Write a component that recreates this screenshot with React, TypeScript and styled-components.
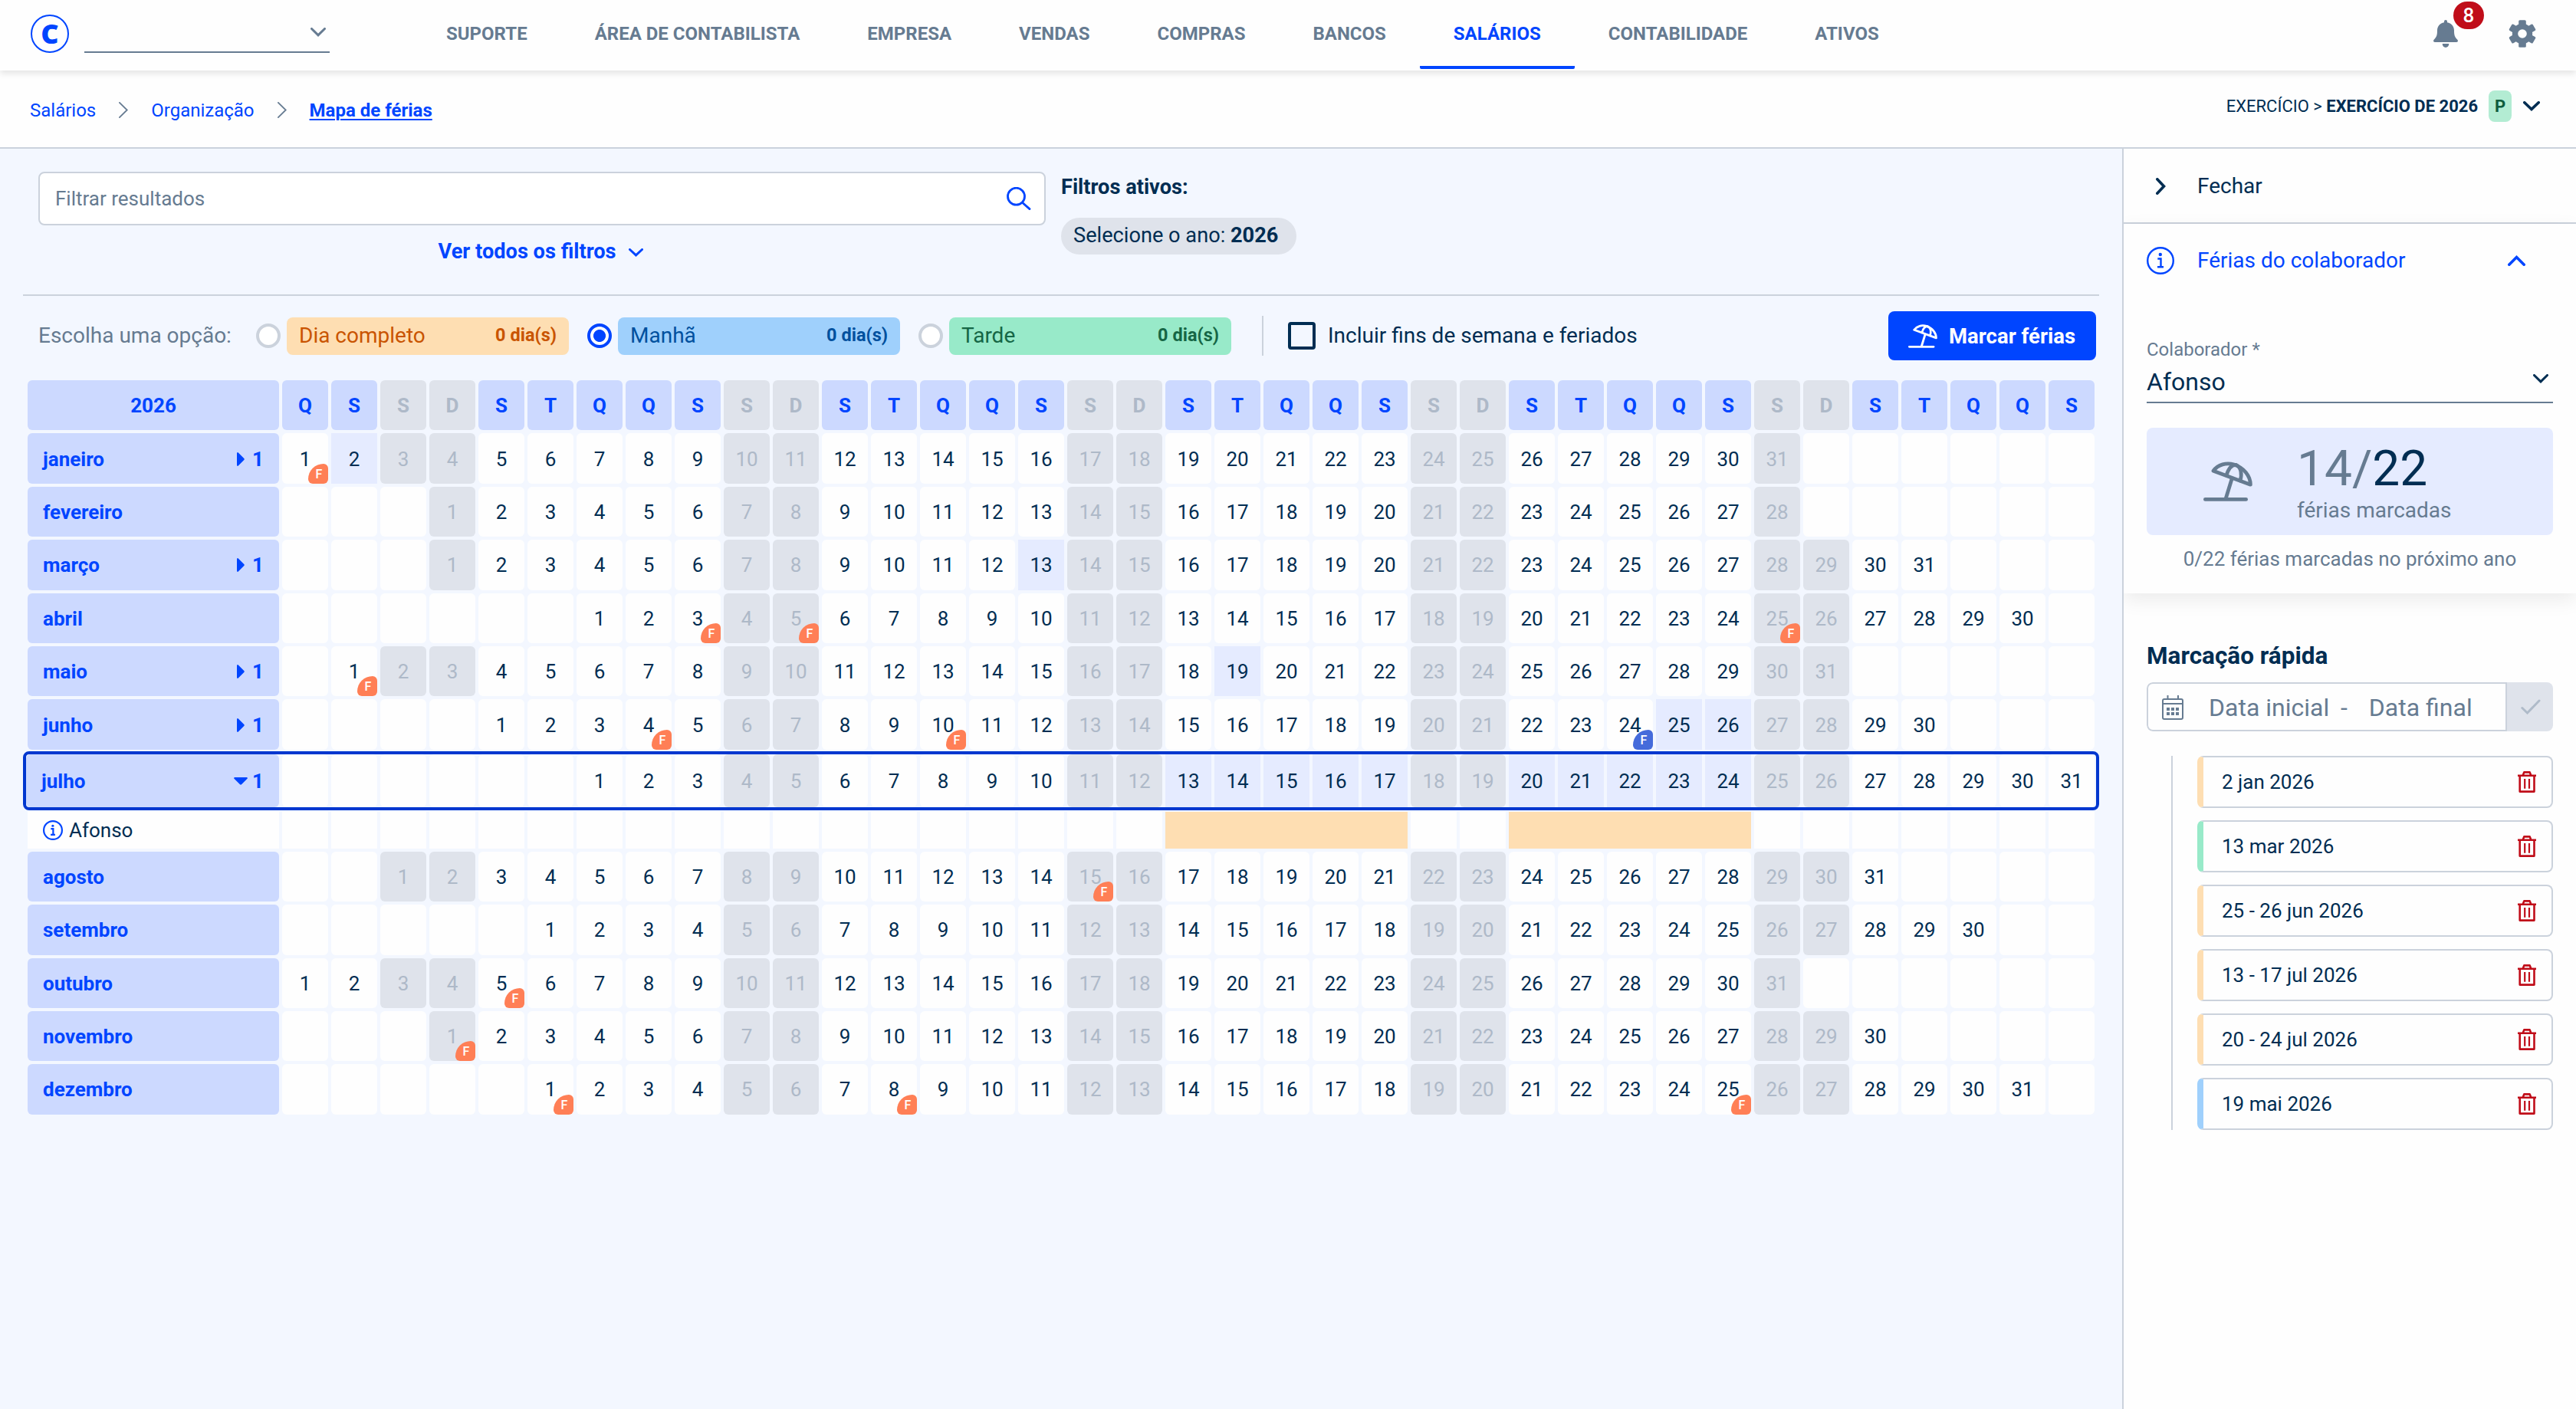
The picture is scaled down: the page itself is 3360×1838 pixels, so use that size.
import React from 'react';
import styled, { createGlobalStyle, css } from 'styled-components';

const c = {
  blue: '#0045ff',
  outline: '#0037cf',
  navy: '#002d52',
  slate: '#667b91',
  line: '#cbd2dc',
  page: '#f3f7ff',
  head: '#ccd9ff',
  weekend: '#dfe3eb',
  muted: '#aeb9c8',
  picked: '#e5ebff',
  orange: '#fedeb2',
  sky: '#9fd0fc',
  mint: '#98eac9',
  red: '#c00d19',
};

const Global = createGlobalStyle`
  *, *::before, *::after { box-sizing: border-box; }
  html, body { margin: 0; padding: 0; background: ${c.page}; }
  body { font-family: Roboto, "Liberation Sans", sans-serif; font-size: 26px; line-height: 1; color: ${c.navy}; }
  svg { display: block; flex: none; }
`;

const Page = styled.div`
  width: 3360px;
  height: 1838px;
  display: flex;
  flex-direction: column;
  overflow: hidden;
`;

/* ---------- header ---------- */
const Header = styled.header`
  position: relative;
  z-index: 2;
  flex: none;
  height: 92px;
  padding: 0 52px 4px 40px;
  display: flex;
  align-items: center;
  background: #fefefe;
  box-shadow: 0 4px 8px rgba(0, 0, 0, 0.1);
`;
const Logo = styled.div`
  width: 50px;
  height: 50px;
  border: 2.5px solid ${c.blue};
  border-radius: 50%;
  display: flex;
  align-items: center;
  justify-content: center;
  color: ${c.blue};
  font: 800 36px/1 "Open Sans", sans-serif;
`;
const CompanySelect = styled.div`
  width: 320px;
  height: 50px;
  margin-left: 20px;
  padding: 17px 5px 0 0;
  display: flex;
  justify-content: flex-end;
  align-items: flex-start;
  border-bottom: 2px solid ${c.slate};
`;
const Nav = styled.nav`
  margin-left: 108px;
  display: flex;
  height: 92px;
  margin-bottom: -4px;
`;
const NavItem = styled.a<{ $active?: boolean }>`
  height: 90px;
  padding: 1px 44px 0;
  display: flex;
  align-items: center;
  border-bottom: 4px solid ${(p) => (p.$active ? c.blue : 'transparent')};
  border-radius: 2px;
  font-size: 24px;
  font-weight: 700;
  white-space: nowrap;
  color: ${(p) => (p.$active ? c.blue : c.slate)};
`;
const HeaderIcons = styled.div`
  margin-left: auto;
  display: flex;
  align-items: center;
  gap: 66px;
`;
const BellBox = styled.div`
  position: relative;
`;
const Count = styled.span`
  position: absolute;
  left: 26px;
  top: -24px;
  width: 40px;
  height: 36px;
  border-radius: 18px;
  background: ${c.red};
  color: #fff;
  font-size: 26px;
  font-weight: 500;
  display: flex;
  align-items: center;
  justify-content: center;
`;

/* ---------- breadcrumbs ---------- */
const CrumbBar = styled.div`
  flex: none;
  height: 102px;
  padding: 3px 47px 0 39px;
  display: flex;
  align-items: center;
  justify-content: space-between;
  background: #fefefe;
  border-bottom: 2px solid ${c.line};
`;
const Crumbs = styled.div`
  display: flex;
  align-items: center;
  gap: 30px;
`;
const Crumb = styled.a<{ $current?: boolean }>`
  font-size: 24px;
  color: ${c.blue};
  font-weight: ${(p) => (p.$current ? 700 : 400)};
  text-decoration: ${(p) => (p.$current ? 'underline' : 'none')};
  text-decoration-thickness: 2px;
  text-underline-offset: 3px;
`;
const Exercise = styled.div`
  display: flex;
  align-items: center;
  margin-bottom: 10px;
  font-size: 22px;
  white-space: pre;
`;
const Tag = styled.span`
  width: 30px;
  height: 41px;
  margin: 0 15px 0 14px;
  border-radius: 8px;
  background: #b3ecd3;
  color: #0f5c3d;
  font-weight: 700;
  display: flex;
  align-items: center;
  justify-content: center;
`;

/* ---------- main ---------- */
const Body = styled.div`
  flex: 1;
  display: flex;
  min-height: 0;
`;
const Main = styled.main`
  width: 2768px;
  flex: none;
`;
const Filters = styled.section`
  height: 190px;
  padding: 30px 0 0 50px;
  display: flex;
  gap: 20px;
`;
const SearchCol = styled.div`
  width: 1314px;
  display: flex;
  flex-direction: column;
  align-items: center;
`;
const SearchBox = styled.div`
  width: 100%;
  height: 70px;
  padding: 0 17px 0 20px;
  display: flex;
  align-items: center;
  justify-content: space-between;
  border: 2px solid ${c.line};
  border-radius: 8px;
  background: #fff;
  color: ${c.slate};
`;
const AllFilters = styled.a`
  margin-top: 21px;
  height: 28px;
  padding-right: 4px;
  display: flex;
  align-items: center;
  gap: 16px;
  font-size: 27.2px;
  font-weight: 700;
  color: ${c.blue};
`;
const ActiveCol = styled.div`
  display: flex;
  flex-direction: column;
  align-items: flex-start;
`;
const ActiveTitle = styled.div`
  height: 60px;
  padding-top: 7px;
  font-size: 27.2px;
  font-weight: 700;
`;
const Chip = styled.div`
  height: 48px;
  padding: 0 24px 0 16px;
  display: flex;
  align-items: center;
  border-radius: 24px;
  background: ${c.weekend};
  font-size: 27.2px;
  white-space: pre;
`;
const Rule = styled.hr`
  height: 2px;
  margin: 0 30px;
  border: 0;
  background: ${c.line};
`;
const Options = styled.section`
  height: 104px;
  padding: 0 34px 0 50px;
  display: flex;
  align-items: center;
`;
const OptionsLabel = styled.span`
  width: 284px;
  font-size: 28px;
  color: ${c.slate};
`;
const Radio = styled.span<{ $on?: boolean }>`
  width: 32px;
  height: 32px;
  margin-right: 8px;
  border-radius: 50%;
  border: 4px solid ${(p) => (p.$on ? c.blue : c.line)};
  background: ${(p) => (p.$on ? `radial-gradient(circle, ${c.blue} 7.6px, #fff 8.4px)` : '#fff')};
`;
const Kind = styled.div<{ $bg: string; $fg: string }>`
  width: 368px;
  height: 49px;
  margin-right: 24px;
  padding: 0 16px;
  display: flex;
  align-items: center;
  justify-content: space-between;
  border-radius: 8px;
  background: ${(p) => p.$bg};
  color: ${(p) => p.$fg};
  font-size: 28px;
  b { font-size: 23.5px; font-weight: 700; }
`;
const Divider = styled.span`
  width: 2px;
  height: 52px;
  margin: 0 32px 0 16px;
  background: ${c.line};
`;
const Checkbox = styled.span`
  width: 36px;
  height: 36px;
  margin-right: 16px;
  border: 4px solid ${c.navy};
  border-radius: 4px;
`;
const CheckLabel = styled.span`
  font-size: 28px;
`;
const Button = styled.button`
  width: 271px;
  height: 64px;
  margin-left: auto;
  padding: 1px 0 0 26px;
  display: flex;
  align-items: center;
  gap: 15px;
  border: 0;
  border-radius: 8px;
  background: ${c.blue};
  color: #fff;
  font: 700 27.5px/1 Roboto, sans-serif;
  white-space: nowrap;
`;

/* ---------- calendar ---------- */
const Calendar = styled.section`
  padding: 6px 36px 0 36px;
  display: flex;
  flex-direction: column;
  gap: 4px;
`;
const Row = styled.div<{ $open?: boolean }>`
  display: grid;
  grid-template-columns: 328px repeat(37, 60px);
  gap: 4px;
  height: 65.4px;
  ${(p) =>
    p.$open &&
    css`
      grid-template-columns: 330px repeat(37, 60px);
      width: 2708px;
      height: 77px;
      margin: -2px 0 -2px -6px;
      border: 4px solid ${c.outline};
      border-radius: 8px;
    `}
`;
const HeadCell = styled.div<{ $off?: boolean }>`
  display: flex;
  align-items: center;
  justify-content: center;
  border-radius: 6px;
  background: ${(p) => (p.$off ? c.weekend : c.head)};
  color: ${(p) => (p.$off ? c.muted : c.blue)};
  font-size: 26px;
  font-weight: 700;
`;
const MonthCell = styled.div`
  padding: 1px 20px 0;
  display: flex;
  align-items: center;
  justify-content: space-between;
  border-radius: 6px;
  background: ${c.head};
  color: ${c.blue};
  font-size: 26px;
  font-weight: 700;
`;
const Toggle = styled.span`
  display: flex;
  align-items: center;
  gap: 4px;
`;
const ToggleIcon = styled.span`
  width: 22px;
  display: flex;
  justify-content: center;
`;
const Day = styled.div<{ $off?: boolean; $picked?: boolean }>`
  position: relative;
  padding-top: 1px;
  display: flex;
  align-items: center;
  justify-content: center;
  border-radius: ${(p) => (p.$picked ? 0 : 6)}px;
  background: ${(p) => (p.$off ? c.weekend : p.$picked ? c.picked : '#fefefe')};
  color: ${(p) => (p.$off ? c.muted : c.navy)};
  font-size: 26px;
`;
const Holiday = styled.span<{ $local?: boolean }>`
  position: absolute;
  right: 0;
  bottom: 0;
  width: 26px;
  height: 26px;
  padding: 2px 0 0 2px;
  border-radius: 20px 6px 6px 6px;
  background: ${(p) => (p.$local ? '#456bdb' : '#ff7f56')};
  color: #fff;
  font-size: 16px;
  font-weight: 500;
  display: flex;
  align-items: center;
  justify-content: center;
`;
const PersonRow = styled(Row)`
  height: 48px;
`;
const Person = styled.div`
  padding-left: 20px;
  display: flex;
  align-items: center;
  gap: 8px;
  background: #fefefe;
  font-size: 26px;
`;
const Slot = styled.div<{ $span?: number }>`
  grid-column: span ${(p) => p.$span ?? 1};
  background: ${(p) => (p.$span ? c.orange : '#fefefe')};
`;

/* ---------- sidebar ---------- */
const Side = styled.aside`
  width: 592px;
  flex: none;
  border-left: 2px solid ${c.line};
  background: #fefefe;
  overflow: hidden;
`;
const CloseRow = styled.div`
  height: 98px;
  padding: 1px 0 0 42px;
  display: flex;
  align-items: center;
  gap: 41px;
  border-bottom: 2px solid ${c.line};
  font-size: 28px;
`;
const Panel = styled.div`
  height: 482px;
  padding: 0 30px;
  box-shadow: 0 8px 24px rgba(0, 0, 0, 0.08);
`;
const PanelTitle = styled.div`
  height: 96px;
  padding-right: 36px;
  display: flex;
  align-items: center;
  gap: 30px;
  color: ${c.blue};
  font-size: 28px;
  svg:last-child { margin-left: auto; }
`;
const FieldLabel = styled.div`
  margin-top: 56px;
  height: 24px;
  color: ${c.slate};
  font-size: 24px;
`;
const Select = styled.div`
  height: 58px;
  padding: 4px 6px 0 0;
  display: flex;
  align-items: center;
  justify-content: space-between;
  border-bottom: 2px solid ${c.slate};
  font-size: 32px;
  svg { margin-bottom: 8px; }
`;
const Summary = styled.div`
  height: 140px;
  margin-top: 32px;
  padding-left: 74px;
  display: flex;
  align-items: flex-start;
  border-radius: 8px;
  background: ${c.picked};
  color: ${c.slate};
  svg { margin-top: 44px; }
`;
const SummaryText = styled.div`
  margin: 22px 0 0 58px;
  font-size: 28px;
`;
const Big = styled.div`
  height: 72px;
  font-size: 64px;
  line-height: 63px;
  b { font-weight: 400; color: ${c.navy}; }
`;
const NextYear = styled.div`
  margin-top: 14px;
  line-height: 34px;
  text-align: center;
  font-size: 26px;
  color: ${c.slate};
`;
const Quick = styled.div`
  padding: 63px 30px 0;
`;
const QuickTitle = styled.div`
  height: 53px;
  line-height: 37px;
  font-size: 31.5px;
  font-weight: 700;
`;
const DateInput = styled.div`
  height: 64px;
  display: flex;
  border-radius: 8px;
  overflow: hidden;
`;
const DateFields = styled.div`
  width: 470px;
  padding: 1px 0 0 18px;
  display: flex;
  align-items: center;
  border: 2px solid ${c.line};
  border-radius: 8px 0 0 8px;
  color: ${c.slate};
  font-size: 32px;
  white-space: nowrap;
`;
const DateFrom = styled.span`
  width: 172px;
  margin-left: 33px;
`;
const DateTo = styled.span`
  margin-left: 28px;
`;
const Confirm = styled.div`
  width: 60px;
  padding-left: 2px;
  display: flex;
  align-items: center;
  justify-content: center;
  background: ${c.weekend};
`;
const Bookings = styled.div`
  margin: 32px 0 0 32px;
  padding-left: 32px;
  border-left: 2px solid ${c.line};
  display: flex;
  flex-direction: column;
  gap: 16px;
`;
const Booking = styled.div<{ $tone: string }>`
  height: 68px;
  padding: 0 20px 0 24px;
  display: flex;
  align-items: center;
  justify-content: space-between;
  border: 2px solid ${c.line};
  border-left: 8px solid ${(p) => p.$tone};
  border-radius: 8px;
  font-size: 26px;
`;

/* ---------- icons ---------- */
const Chevron = ({ w, h, d, color, s = 3 }: { w: number; h: number; d: 'up' | 'down' | 'right'; color: string; s?: number }) => {
  const o = s / 2;
  const path =
    d === 'down'
      ? `M${o} ${o}L${w / 2} ${h - o * 1.4}L${w - o} ${o}`
      : d === 'up'
        ? `M${o} ${h - o}L${w / 2} ${o * 1.4}L${w - o} ${h - o}`
        : `M${o} ${o}L${w - o * 1.4} ${h / 2}L${o} ${h - o}`;
  return (
    <svg width={w} height={h} viewBox={`0 0 ${w} ${h}`} fill="none" stroke={color} strokeWidth={s} strokeLinecap="round">
      <path d={path} />
    </svg>
  );
};

const Umbrella = ({ w, s = 4.8 }: { w: number; s?: number }) => (
  <svg width={w} height={(w * 52) / 64} viewBox="0 0 64 52" fill="none" stroke="currentColor" strokeWidth={s} strokeLinejoin="round" strokeLinecap="round">
    <path d="M13 12.200C19 3.800 30 1 40 4C53 8.200 61.300 19 61.400 30.200Z" />
    <path d="M30 18.200C32.500 10 37 4 43 4.500C49.500 8 50.500 17 48 25" />
    <path d="M37.300 22L29.300 48" />
    <path d="M2.400 49.400H55.600" />
  </svg>
);

const Info = ({ size, s = 2.4 }: { size: number; s?: number }) => (
  <svg width={size} height={size} viewBox="0 0 36 36" fill="none" stroke={c.blue} strokeWidth={s}>
    <circle cx="18" cy="18" r={18 - s / 2} />
    <circle cx="17.800" cy="10" r="2.200" fill={c.blue} stroke="none" />
    <path d="M14.300 15.500H18.500V26M14 26.200H22" />
  </svg>
);

const Bell = () => (
  <svg width="32" height="36" viewBox="0 0 32 36" fill={c.slate}>
    <path d="M16 0a2 2 0 0 1 2 2v1.300c5.300 1 9 5 9 10.500 0 6 .8 8.500 4.300 12 1.300 1.500.5 3.200-1.100 3.200H1.800C.2 29-.6 27.300.7 25.800 4.200 22.300 5 19.800 5 13.800 5 8.300 8.700 4.300 14 3.300V2a2 2 0 0 1 2-2z" />
    <path d="M11.700 31h8.600a4.300 5 0 0 1-8.600 0z" />
  </svg>
);

const Gear = () => (
  <svg width="36" height="36" viewBox="-18 -18 36 36">
    <mask id="hub">
      <rect x="-18" y="-18" width="36" height="36" fill="#fff" />
      <circle r="5.800" fill="#000" />
    </mask>
    <g fill={c.slate} mask="url(#hub)">
      <circle r="13.200" />
      {[0, 60, 120, 180, 240, 300].map((a) => (
        <rect key={a} x="-4.800" y="-17.800" width="9.600" height="12" rx="1.600" transform={`rotate(${a})`} />
      ))}
    </g>
  </svg>
);

const Search = () => (
  <svg width="32" height="30" viewBox="0 0 32 30" fill="none" stroke={c.blue} strokeWidth="2.800" strokeLinecap="round">
    <circle cx="12.500" cy="12.200" r="11" />
    <path d="M20.500 20.200L30 28.600" />
  </svg>
);

const CalendarIcon = () => (
  <svg width="28" height="32" viewBox="0 0 28 32" fill="none" stroke={c.slate} strokeWidth="2">
    <rect x="1" y="5" width="26" height="26" rx="2" />
    <path d="M1 11H27M7.500 0V5M21 0V5" />
    {[8, 14, 20].map((x) => (
      <g key={x} fill={c.slate} stroke="none">
        <rect x={x - 2} y="16" width="4" height="4" />
        <rect x={x - 2} y="22" width="4" height="4" />
      </g>
    ))}
  </svg>
);

const Check = () => (
  <svg width="26" height="20" viewBox="0 0 26 20" fill="none" stroke="#afbbc9" strokeWidth="3" strokeLinecap="round">
    <path d="M1.800 11.500L8.500 18L24 2" />
  </svg>
);

const Trash = () => (
  <svg width="24" height="28" viewBox="0 0 24 28" fill="none" stroke={c.red} strokeWidth="2.600" strokeLinejoin="round">
    <path d="M0 5.800H24M6.800 5.300L8.300 1.400H15.700L17.200 5.300M2.700 6V26.600H21.500V6" />
    <path d="M9.200 10V22.800M15 10V22.800" strokeWidth="2.200" />
  </svg>
);

const Caret = ({ open }: { open?: boolean }) =>
  open ? (
    <svg width="18" height="10" viewBox="0 0 18 10" fill={c.blue}>
      <path d="M1 0H17Q18.500 .8 17.500 1.800L10 9.300Q9 10.200 8 9.300L.5 1.800Q-.5 .8 1 0Z" />
    </svg>
  ) : (
    <svg width="10" height="18" viewBox="0 0 10 18" fill={c.blue}>
      <path d="M0 1Q.8 -.5 1.800 .5L9.300 8Q10.200 9 9.300 10L1.800 17.500Q.8 18.500 0 17Z" />
    </svg>
  );

/* ---------- data ---------- */
type Month = {
  name: string;
  start: number;
  days: number;
  count?: number;
  open?: boolean;
  holidays?: number[];
  local?: number[];
  picked?: number[];
};

const months: Month[] = [
  { name: 'janeiro', start: 0, days: 31, count: 1, holidays: [1], picked: [2] },
  { name: 'fevereiro', start: 3, days: 28 },
  { name: 'março', start: 3, days: 31, count: 1, picked: [13] },
  { name: 'abril', start: 6, days: 30, holidays: [3, 5, 25] },
  { name: 'maio', start: 1, days: 31, count: 1, holidays: [1], picked: [19] },
  { name: 'junho', start: 4, days: 30, count: 1, holidays: [4, 10], local: [24], picked: [25, 26] },
  { name: 'julho', start: 6, days: 31, count: 1, open: true, picked: [13, 14, 15, 16, 17, 20, 21, 22, 23, 24] },
  { name: 'agosto', start: 2, days: 31, holidays: [15] },
  { name: 'setembro', start: 5, days: 30 },
  { name: 'outubro', start: 0, days: 31, holidays: [5] },
  { name: 'novembro', start: 3, days: 30, holidays: [1] },
  { name: 'dezembro', start: 5, days: 31, holidays: [1, 8, 25] },
];

const week = ['Q', 'S', 'S', 'D', 'S', 'T', 'Q'];
const columns = Array.from({ length: 37 }, (_, i) => i);
const isWeekend = (i: number) => i % 7 === 2 || i % 7 === 3;

const nav = ['SUPORTE', 'ÁREA DE CONTABILISTA', 'EMPRESA', 'VENDAS', 'COMPRAS', 'BANCOS', 'SALÁRIOS', 'CONTABILIDADE', 'ATIVOS'];

const kinds = [
  { name: 'Dia completo', bg: c.orange, fg: '#c95400' },
  { name: 'Manhã', bg: c.sky, fg: '#00509e', on: true },
  { name: 'Tarde', bg: c.mint, fg: '#156645' },
];

const bookings = [
  { date: '2 jan 2026', tone: c.orange },
  { date: '13 mar 2026', tone: c.mint },
  { date: '25 - 26 jun 2026', tone: c.orange },
  { date: '13 - 17 jul 2026', tone: c.orange },
  { date: '20 - 24 jul 2026', tone: c.orange },
  { date: '19 mai 2026', tone: c.sky },
];

const MonthRow = ({ m }: { m: Month }) => (
  <Row $open={m.open}>
    <MonthCell>
      {m.name}
      {m.count && (
        <Toggle>
          <ToggleIcon>
            <Caret open={m.open} />
          </ToggleIcon>
          <span>{m.count}</span>
        </Toggle>
      )}
    </MonthCell>
    {columns.map((i) => {
      const day = i - m.start + 1;
      if (day < 1 || day > m.days) return <Day key={i} />;
      const local = m.local?.includes(day);
      return (
        <Day key={i} $off={isWeekend(i)} $picked={m.picked?.includes(day)}>
          {day}
          {(local || m.holidays?.includes(day)) && <Holiday $local={local}>F</Holiday>}
        </Day>
      );
    })}
  </Row>
);

const slots = (n: number) => Array.from({ length: n }, (_, i) => <Slot key={i} />);

export default function App() {
  return (
    <Page>
      <Global />
      <Header>
        <Logo>C</Logo>
        <CompanySelect>
          <Chevron w={20} h={12} d="down" color={c.slate} />
        </CompanySelect>
        <Nav>
          {nav.map((n) => (
            <NavItem key={n} $active={n === 'SALÁRIOS'}>
              {n}
            </NavItem>
          ))}
        </Nav>
        <HeaderIcons>
          <BellBox>
            <Bell />
            <Count>8</Count>
          </BellBox>
          <Gear />
        </HeaderIcons>
      </Header>

      <CrumbBar>
        <Crumbs>
          <Crumb>Salários</Crumb>
          <Chevron w={12} h={21} d="right" color={c.slate} s={1.8} />
          <Crumb>Organização</Crumb>
          <Chevron w={12} h={21} d="right" color={c.slate} s={1.8} />
          <Crumb $current>Mapa de férias</Crumb>
        </Crumbs>
        <Exercise>
          {'EXERCÍCIO > '}
          <b>EXERCÍCIO DE 2026</b>
          <Tag>P</Tag>
          <Chevron w={22} h={13} d="down" color={c.navy} s={3.6} />
        </Exercise>
      </CrumbBar>

      <Body>
        <Main>
          <Filters>
            <SearchCol>
              <SearchBox>
                Filtrar resultados
                <Search />
              </SearchBox>
              <AllFilters>
                Ver todos os filtros
                <Chevron w={19} h={11} d="down" color={c.blue} />
              </AllFilters>
            </SearchCol>
            <ActiveCol>
              <ActiveTitle>Filtros ativos:</ActiveTitle>
              <Chip>
                {'Selecione o ano: '}
                <b>2026</b>
              </Chip>
            </ActiveCol>
          </Filters>
          <Rule />
          <Options>
            <OptionsLabel>Escolha uma opção:</OptionsLabel>
            {kinds.map((k) => (
              <React.Fragment key={k.name}>
                <Radio $on={k.on} />
                <Kind $bg={k.bg} $fg={k.fg}>
                  {k.name}
                  <b>0 dia(s)</b>
                </Kind>
              </React.Fragment>
            ))}
            <Divider />
            <Checkbox />
            <CheckLabel>Incluir fins de semana e feriados</CheckLabel>
            <Button>
              <Umbrella w={38} />
              Marcar férias
            </Button>
          </Options>

          <Calendar>
            <Row>
              <HeadCell>2026</HeadCell>
              {columns.map((i) => (
                <HeadCell key={i} $off={isWeekend(i)}>
                  {week[i % 7]}
                </HeadCell>
              ))}
            </Row>
            {months.map((m) => (
              <React.Fragment key={m.name}>
                <MonthRow m={m} />
                {m.open && (
                  <PersonRow>
                    <Person>
                      <Info size={26} s={3} />
                      Afonso
                    </Person>
                    {slots(18)}
                    <Slot $span={5} />
                    {slots(2)}
                    <Slot $span={5} />
                    {slots(7)}
                  </PersonRow>
                )}
              </React.Fragment>
            ))}
          </Calendar>
        </Main>

        <Side>
          <CloseRow>
            <Chevron w={13} h={22} d="right" color={c.navy} s={3.6} />
            Fechar
          </CloseRow>
          <Panel>
            <PanelTitle>
              <Info size={36} />
              Férias do colaborador
              <Chevron w={23} h={14} d="up" color={c.blue} s={3.6} />
            </PanelTitle>
            <FieldLabel>Colaborador *</FieldLabel>
            <Select>
              Afonso
              <Chevron w={20} h={12} d="down" color={c.navy} />
            </Select>
            <Summary>
              <Umbrella w={64} />
              <SummaryText>
                <Big>
                  14/<b>22</b>
                </Big>
                férias marcadas
              </SummaryText>
            </Summary>
            <NextYear>0/22 férias marcadas no próximo ano</NextYear>
          </Panel>
          <Quick>
            <QuickTitle>Marcação rápida</QuickTitle>
            <DateInput>
              <DateFields>
                <CalendarIcon />
                <DateFrom>Data inicial</DateFrom>-<DateTo>Data final</DateTo>
              </DateFields>
              <Confirm>
                <Check />
              </Confirm>
            </DateInput>
            <Bookings>
              {bookings.map((b) => (
                <Booking key={b.date} $tone={b.tone}>
                  {b.date}
                  <Trash />
                </Booking>
              ))}
            </Bookings>
          </Quick>
        </Side>
      </Body>
    </Page>
  );
}
